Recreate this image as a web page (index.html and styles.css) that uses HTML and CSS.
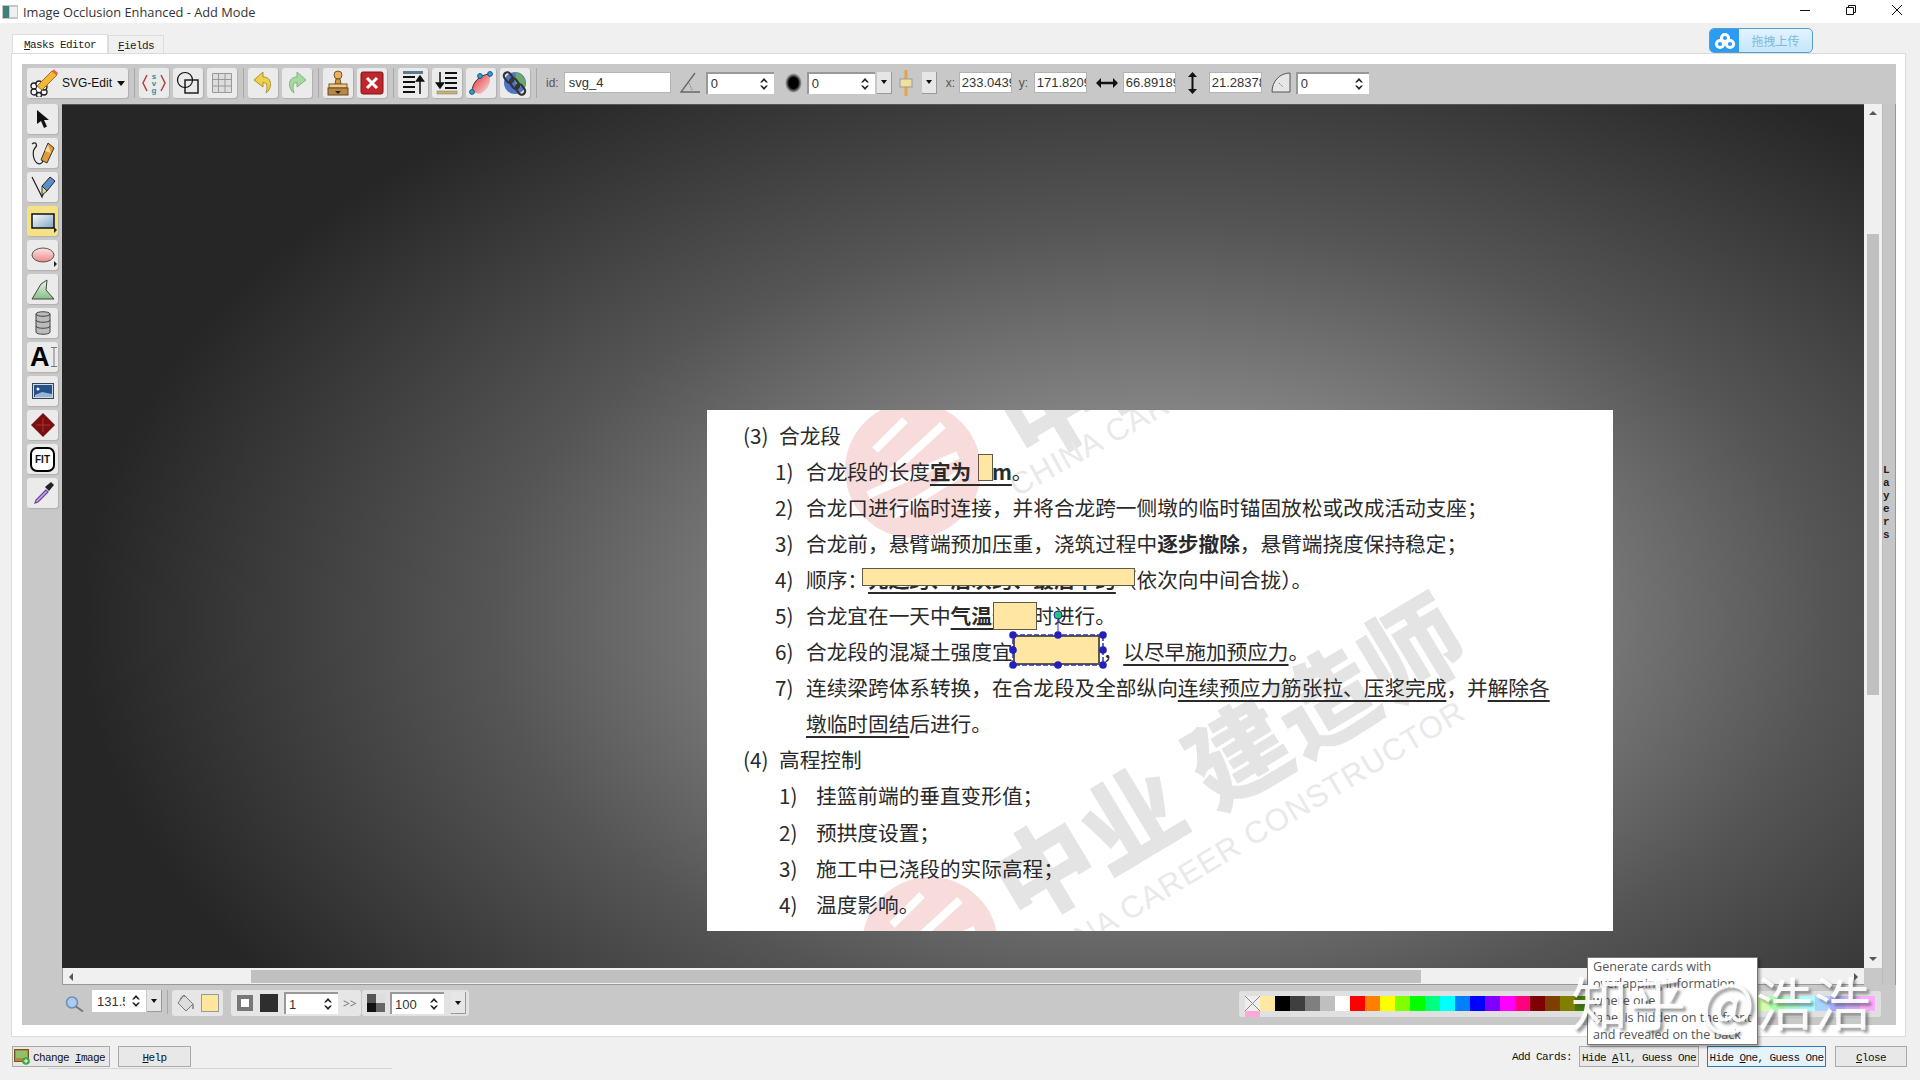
FILE: index.html
```html
<!DOCTYPE html>
<html lang="zh-CN">
<head>
    <meta charset="UTF-8">
    <title>Image Occlusion Enhanced - Add Mode</title>
    <link rel="stylesheet" href="styles.css">
</head>
<body>
    <svg class="defs" width="0" height="0">
        <symbol id="spin" viewBox="0 0 10 14">
            <path d="M5 1 9 5.500H7L5 3.400 3 5.500H1ZM5 13 1 8.500H3L5 10.600 7 8.500H9Z" fill="#222"/>
        </symbol>
    </svg>

    <div class="titlebar">
        <svg class="app-icon" width="16" height="14" viewBox="0 0 16 14">
            <rect width="16" height="14" fill="#c4c8cc"/>
            <rect x="1" y="1" width="6" height="12" fill="#3f7f78"/>
            <rect x="8" y="2" width="7" height="10" fill="#eef0f2"/>
        </svg>
        <span class="title-text">Image Occlusion Enhanced - Add Mode</span>
        <div class="win-buttons">
            <svg width="12" height="12" viewBox="0 0 12 12"><path d="M1 6.500H11" stroke="#111" fill="none"/></svg>
            <svg width="12" height="12" viewBox="0 0 12 12"><path d="M1.500 3.500H8.500V10.500H1.500ZM3.500 3.500V1.500H10.500V8.500H8.500" stroke="#111" fill="none"/></svg>
            <svg width="12" height="12" viewBox="0 0 12 12"><path d="M1 1 11 11M11 1 1 11" stroke="#111" fill="none"/></svg>
        </div>
    </div>

    <div class="tabs">
        <div class="tab tab-on"><u>M</u>asks Editor</div>
        <div class="tab"><u>F</u>ields</div>
    </div>

    <div class="upload-btn">
        <span class="upload-icon">
            <svg width="22" height="18" viewBox="0 0 22 18">
                <g fill="none" stroke="#fff" stroke-width="3">
                    <circle cx="11" cy="6" r="3.600"/>
                    <circle cx="6" cy="12" r="3.600"/>
                    <circle cx="16" cy="12" r="3.600"/>
                </g>
            </svg>
        </span>
        <span class="upload-text">拖拽上传</span>
    </div>

    <div class="panel">
        <div class="editor">
            <div class="top-bar">
                <div class="btn logo-btn">
                    <svg width="30" height="28" viewBox="0 0 30 28">
                        <g fill="#fff" stroke="#222" stroke-width="1.300">
                            <circle cx="5" cy="17" r="3"/><circle cx="5" cy="23" r="3"/><circle cx="10" cy="26" r="2.500"/>
                            <circle cx="15" cy="23" r="3"/><circle cx="15" cy="18" r="3"/><circle cx="10" cy="15" r="3"/>
                        </g>
                        <circle cx="10" cy="20" r="2.500" fill="#fff"/>
                        <path d="M8 17 23 2 28 6 13 21Z" fill="#f0b93a" stroke="#a86a18"/>
                        <path d="M23 2 25 0.500 29 4 28 6Z" fill="#e8604c"/>
                    </svg>
                    <span>SVG-Edit</span>
                    <i class="caret"></i>
                </div>
                <div class="sep"></div>
                <div class="btn">
                    <svg width="26" height="26" viewBox="0 0 26 26">
                        <path d="M6 5 2 13 6 21M20 5 24 13 20 21" fill="none" stroke="#b0413e" stroke-width="1.500"/>
                        <text class="svg-letters" x="13" y="9">s</text>
                        <text class="svg-letters" x="13" y="16">v</text>
                        <text class="svg-letters" x="13" y="23">g</text>
                    </svg>
                </div>
                <div class="btn">
                    <svg width="24" height="26" viewBox="0 0 24 26">
                        <circle cx="9" cy="10" r="7.500" fill="none" stroke="#111" stroke-width="1.200"/>
                        <rect x="9" y="10" width="13" height="13" fill="none" stroke="#111" stroke-width="1.400"/>
                    </svg>
                </div>
                <div class="btn">
                    <svg width="24" height="24" viewBox="0 0 24 24">
                        <path d="M2.500 2.500H21.500V21.500H2.500ZM8.500 2.500V21.500M15 2.500V21.500M2.500 8.500H21.500M2.500 15H21.500" fill="#ddd" stroke="#999"/>
                    </svg>
                </div>
                <div class="sep"></div>
                <div class="btn">
                    <svg width="24" height="26" viewBox="0 0 24 26">
                        <path d="M12 2 3 10 12 17V12.500C16 12.500 17 16 15 23 21 19 22 7 12 7Z" fill="#eed04a" stroke="#a9912c"/>
                    </svg>
                </div>
                <div class="btn">
                    <svg width="24" height="26" viewBox="0 0 24 26">
                        <path d="M12 2 21 10 12 17V12.500C8 12.500 7 16 9 23 3 19 2 7 12 7Z" fill="#a7d8a0" stroke="#84b37e"/>
                    </svg>
                </div>
                <div class="sep"></div>
                <div class="btn">
                    <svg width="26" height="28" viewBox="0 0 26 28">
                        <circle cx="13" cy="6" r="4" fill="#e7b25e" stroke="#7a5420"/>
                        <path d="M11 10H15L16 15H10Z" fill="#d79a44" stroke="#7a5420"/>
                        <rect x="4" y="15" width="18" height="4" fill="#eecb8a" stroke="#7a5420"/>
                        <rect x="3" y="19" width="20" height="7" fill="#b98745" stroke="#6b4a1c"/>
                        <path d="M10 22H16L13 25Z" fill="#222"/>
                    </svg>
                </div>
                <div class="btn">
                    <svg width="24" height="24" viewBox="0 0 24 24">
                        <rect x="1" y="1" width="22" height="22" rx="2" fill="#c0272d" stroke="#7d1518"/>
                        <path d="M7 7 17 17M17 7 7 17" stroke="#fff" stroke-width="3"/>
                    </svg>
                </div>
                <div class="sep"></div>
                <div class="btn">
                    <svg width="24" height="26" viewBox="0 0 24 26">
                        <rect x="2" y="1" width="20" height="3" fill="#5a7a90"/>
                        <path d="M2 7H14M2 12H14M2 17H14M2 22H14" stroke="#111" stroke-width="2"/>
                        <path d="M19 24V8M15.500 11 19 6 22.500 11Z" fill="#111" stroke="#111" stroke-width="1.500"/>
                    </svg>
                </div>
                <div class="btn">
                    <svg width="24" height="26" viewBox="0 0 24 26">
                        <path d="M10 3H22M10 8H22M10 13H22M10 18H22" stroke="#111" stroke-width="2"/>
                        <path d="M5 2V15M1.500 13 5 18 8.500 13Z" fill="#111" stroke="#111" stroke-width="1.500"/>
                        <rect x="2" y="21" width="20" height="3" fill="#c9b36a" stroke="#777" stroke-width=".5"/>
                    </svg>
                </div>
                <div class="btn">
                    <svg width="26" height="26" viewBox="0 0 26 26">
                        <defs>
                            <linearGradient id="curveFill" x1="0" y1="0" x2="1" y2="1">
                                <stop offset="0" stop-color="#e8262a"/>
                                <stop offset="1" stop-color="#f6e6e6"/>
                            </linearGradient>
                        </defs>
                        <path d="M4 22C4 12 12 5 21 4 24 12 20 20 12 24Z" fill="url(#curveFill)"/>
                        <path d="M4 22C4 12 12 5 21 4" fill="none" stroke="#333"/>
                        <circle cx="4" cy="22" r="2.400" fill="#2f9fd8" stroke="#16587c"/>
                        <circle cx="12" cy="6" r="2.400" fill="#2f9fd8" stroke="#16587c"/>
                        <circle cx="22" cy="4" r="2.400" fill="#2f9fd8" stroke="#16587c"/>
                    </svg>
                </div>
                <div class="btn">
                    <svg width="26" height="26" viewBox="0 0 26 26">
                        <circle cx="13" cy="13" r="11" fill="#4f74c4"/>
                        <path d="M13 2C20 3 25 9 23 17 19 15 17 19 14 15 12 11 15 6 13 2Z" fill="#6da86c"/>
                        <g fill="none" stroke="#333" stroke-width="2.200">
                            <rect x="3" y="2" width="7" height="11" rx="3.500" transform="rotate(-35 6.500 7.500)"/>
                            <rect x="9" y="8" width="7" height="11" rx="3.500" transform="rotate(-35 12.500 13.500)"/>
                            <rect x="15" y="14" width="7" height="11" rx="3.500" transform="rotate(-35 18.500 19.500)"/>
                        </g>
                    </svg>
                </div>
                <div class="sep"></div>
                <div class="props">
                    <span class="lbl ml-5">id:</span>
                    <div class="field id-field ml-5">svg_4</div>
                    <svg class="ml-9" width="21" height="22" viewBox="0 0 21 22">
                        <path d="M15 1 1 20H20" fill="none" stroke="#666" stroke-width="1.300"/>
                        <path d="M9 11 13 20" fill="none" stroke="#888" stroke-dasharray="2 1"/>
                    </svg>
                    <div class="spinbox ml-5"><span>0</span><svg width="10" height="14"><use href="#spin"/></svg></div>
                    <svg class="ml-11" width="17" height="22" viewBox="0 0 17 22">
                        <defs>
                            <radialGradient id="blurFill">
                                <stop offset=".55" stop-color="#000"/>
                                <stop offset="1" stop-color="#c8c8c8"/>
                            </radialGradient>
                        </defs>
                        <ellipse cx="8.500" cy="11" rx="8.500" ry="10" fill="url(#blurFill)"/>
                    </svg>
                    <div class="spinbox ml-5"><span>0</span><svg width="10" height="14"><use href="#spin"/></svg></div>
                    <div class="drop ml-2"><i class="caret-sm"></i></div>
                    <svg class="ml-7" width="14" height="26" viewBox="0 0 14 26">
                        <rect x="5.500" y="0" width="3" height="26" fill="#e8a24a"/>
                        <rect x="1" y="9" width="12" height="8" fill="#f0e0a0" stroke="#999"/>
                    </svg>
                    <div class="drop ml-9"><i class="caret-sm"></i></div>
                    <span class="lbl lbl-w15 lbl-x">x:</span>
                    <div class="field num-field">233.0439</div>
                    <span class="lbl lbl-w15">y:</span>
                    <div class="field num-field">171.8209</div>
                    <svg class="ml-9" width="22" height="12" viewBox="0 0 22 12">
                        <path d="M5 1 0 6 5 11V7.200H17V11L22 6 17 1V4.800H5Z" fill="#111"/>
                    </svg>
                    <div class="field num-field ml-5">66.89189</div>
                    <svg class="ml-11" width="11" height="22" viewBox="0 0 11 22">
                        <path d="M1 5 5.500 0 10 5H6.500V17H10L5.500 22 1 17H4.500V5Z" fill="#111"/>
                    </svg>
                    <div class="field num-field ml-11">21.28378</div>
                    <svg class="ml-9" width="20" height="22" viewBox="0 0 20 22">
                        <path d="M1 20H19V1C9 1 1 9 1 20Z" fill="#e6e6e6" stroke="#555"/>
                        <path d="M8 11 12 15" stroke="#888" stroke-dasharray="2 1"/>
                    </svg>
                    <div class="spinbox spin-wide ml-5"><span>0</span><svg width="10" height="14"><use href="#spin"/></svg></div>
                </div>
            </div>

            <div class="middle">
                <div class="tools">
                    <div class="btn tool">
                        <svg width="16" height="18" viewBox="0 0 16 18"><path d="M2 0V14L6 11 9 18 12 16.500 9 10H14Z" fill="#111"/></svg>
                    </div>
                    <div class="btn tool">
                        <svg width="26" height="26" viewBox="0 0 26 26">
                            <path d="M2 4C6 1 8 5 5 8 2 11 3 20 7 23 10 25 12 23 13 21" fill="none" stroke="#222" stroke-width="1.200"/>
                            <path d="M11 20 18 3 24 8 17 23Z" fill="#e59a3a" stroke="#333"/>
                            <path d="M15 11 21 13 18 5Z" fill="#f3d9a0"/>
                        </svg>
                    </div>
                    <div class="btn tool">
                        <svg width="26" height="26" viewBox="0 0 26 26">
                            <path d="M2 3 12 23 17 10" fill="none" stroke="#222" stroke-width="1.200"/>
                            <path d="M12 12 20 3 25 7 17 17Z" fill="#5b8fc0" stroke="#224"/>
                            <path d="M12 12 17 17 12 21Z" fill="#e8d8a0" stroke="#333"/>
                        </svg>
                    </div>
                    <div class="btn tool tool-on">
                        <svg width="24" height="16" viewBox="0 0 24 16">
                            <defs>
                                <linearGradient id="rectFill" x1="0" y1="0" x2="1" y2="1">
                                    <stop offset="0" stop-color="#fff"/>
                                    <stop offset="1" stop-color="#7fa3c4"/>
                                </linearGradient>
                            </defs>
                            <rect x="1" y="1" width="22" height="14" fill="url(#rectFill)" stroke="#111" stroke-width="1.500"/>
                        </svg>
                        <i class="flyout"></i>
                    </div>
                    <div class="btn tool">
                        <svg width="24" height="16" viewBox="0 0 24 16">
                            <defs>
                                <linearGradient id="ellFill" x1="0" y1="0" x2="0" y2="1">
                                    <stop offset="0" stop-color="#fbe4e4"/>
                                    <stop offset="1" stop-color="#e88"/>
                                </linearGradient>
                            </defs>
                            <ellipse cx="12" cy="8" rx="11" ry="7" fill="url(#ellFill)" stroke="#555"/>
                        </svg>
                        <i class="flyout"></i>
                    </div>
                    <div class="btn tool">
                        <svg width="24" height="22" viewBox="0 0 24 22">
                            <defs>
                                <linearGradient id="polyFill" x1="0" y1="0" x2="0" y2="1">
                                    <stop offset="0" stop-color="#eaf5ea"/>
                                    <stop offset="1" stop-color="#86c08a"/>
                                </linearGradient>
                            </defs>
                            <path d="M1 21 10 6 16 2 15 12 23 21Z" fill="url(#polyFill)" stroke="#444"/>
                        </svg>
                    </div>
                    <div class="btn tool">
                        <svg width="16" height="24" viewBox="0 0 16 24">
                            <path d="M1 3C1 0 15 0 15 3V21C15 24 1 24 1 21Z" fill="#bbb" stroke="#444"/>
                            <path d="M1 3C1 6 15 6 15 3M1 9C1 12 15 12 15 9M1 15C1 18 15 18 15 15" fill="none" stroke="#444"/>
                        </svg>
                    </div>
                    <div class="btn tool tool-text">A<svg width="6" height="20" viewBox="0 0 6 20"><path d="M0 .5H6M3 .5V19.500M0 19.500H6" stroke="#777" fill="none"/></svg></div>
                    <div class="btn tool">
                        <svg width="22" height="16" viewBox="0 0 22 16">
                            <rect x=".5" y=".5" width="21" height="15" fill="#d0d8e0" stroke="#345"/>
                            <rect x="2" y="2" width="18" height="12" fill="#24508c"/>
                            <circle cx="6" cy="6" r="1.500" fill="#fff"/>
                            <path d="M3 12 10 9 20 11V14H3Z" fill="#9ab4d4"/>
                        </svg>
                    </div>
                    <div class="btn tool">
                        <svg width="24" height="24" viewBox="0 0 24 24">
                            <path d="M12 0 24 12 12 24 0 12Z" fill="#7a0f0f"/>
                            <path d="M12 5V19M5 12H19" stroke="#a33" stroke-width="1"/>
                        </svg>
                    </div>
                    <div class="btn tool"><span class="fit-label">FIT</span></div>
                    <div class="btn tool">
                        <svg width="24" height="24" viewBox="0 0 24 24">
                            <path d="M15 9 5 19 4 22 7 21 17 11Z" fill="#c8a8e8" stroke="#6b3fa0" stroke-width="1.200"/>
                            <path d="M14 6 18 10 23 4 20 1Z" fill="#222"/>
                        </svg>
                    </div>
                </div>

                <div class="main">
                    <div class="canvas-row">
                        <div class="canvas">
                            <div class="doc">
                                <svg class="watermark" width="906" height="521" viewBox="0 0 906 521">
                                    <g transform="translate(206 60)">
                                        <circle r="68" fill="#f8dcdc"/>
                                        <path d="M-38 -20 -8 -50M-30 10 30 -45M-45 25 45 -15M-20 45 45 5" stroke="#fff" stroke-width="8"/>
                                    </g>
                                    <g transform="translate(223 535)">
                                        <circle r="68" fill="#f8dcdc"/>
                                        <path d="M-38 -20 -8 -50M-30 10 30 -45M-45 25 45 -15M-20 45 45 5" stroke="#fff" stroke-width="8"/>
                                    </g>
                                    <text class="wm-big" x="548" y="-80" text-anchor="middle" transform="rotate(-31 548 -80)">中业 建造师</text>
                                    <text class="wm-big" x="541" y="382" text-anchor="middle" transform="rotate(-31 541 382)">中业 建造师</text>
                                    <text class="wm-small" x="310" y="87" transform="rotate(-29 310 87)">CHINA CAREER CONSTRUCTOR</text>
                                    <text class="wm-small" x="327" y="568" transform="rotate(-31 327 568)">CHINA CAREER CONSTRUCTOR</text>
                                </svg>

                                <div class="doc-text">
                                    <div class="row head"><span class="n-head">(3)</span>合龙段</div>
                                    <div class="row"><span class="n">1)</span><span>合龙段的长度<b class="ul">宜为&emsp;m</b>。</span></div>
                                    <div class="row"><span class="n">2)</span><span>合龙口进行临时连接，并将合龙跨一侧墩的临时锚固放松或改成活动支座；</span></div>
                                    <div class="row"><span class="n">3)</span><span>合龙前，悬臂端预加压重，浇筑过程中<b>逐步撤除</b>，悬臂端挠度保持稳定；</span></div>
                                    <div class="row"><span class="n">4)</span><span>顺序：<b class="ul">先边跨、后次跨、最后中跨</b>（依次向中间合拢）。</span></div>
                                    <div class="row"><span class="n">5)</span><span>合龙宜在一天中<b class="ul">气温最低</b>时进行。</span></div>
                                    <div class="row"><span class="n">6)</span><span>合龙段的混凝土强度宜<i class="gap-2"></i>，<span class="ul">以尽早施加预应力</span>。</span></div>
                                    <div class="row"><span class="n">7)</span><span>连续梁跨体系转换，在合龙段及全部纵向<span class="ul">连续预应力筋张拉、压浆完成</span>，并<span class="ul">解除各</span></span></div>
                                    <div class="row"><span class="n"></span><span><span class="ul">墩临时固结</span>后进行。</span></div>
                                    <div class="row head"><span class="n-head">(4)</span>高程控制</div>
                                    <div class="row sub"><span class="n">1)</span><span>挂篮前端的垂直变形值；</span></div>
                                    <div class="row sub"><span class="n">2)</span><span>预拱度设置；</span></div>
                                    <div class="row sub"><span class="n">3)</span><span>施工中已浇段的实际高程；</span></div>
                                    <div class="row sub"><span class="n">4)</span><span>温度影响。</span></div>
                                </div>

                                <div class="mask mask-1"></div>
                                <div class="mask mask-2"></div>
                                <div class="mask mask-3"></div>
                                <div class="mask mask-4"></div>
                                <svg class="handles" width="104" height="76" viewBox="0 0 104 76">
                                    <path d="M51 22V42" stroke="#3b3bc8"/>
                                    <rect x="6" y="42" width="90" height="30" fill="none" stroke="#3333aa" stroke-width="1.500" stroke-dasharray="5 2"/>
                                    <circle cx="51" cy="22" r="4" fill="#22c87a" stroke="#2222aa"/>
                                    <g fill="#2222bb">
                                        <circle cx="6" cy="42" r="3.800"/><circle cx="51" cy="42" r="3.800"/><circle cx="96" cy="42" r="3.800"/>
                                        <circle cx="6" cy="57" r="3.800"/><circle cx="96" cy="57" r="3.800"/>
                                        <circle cx="6" cy="72" r="3.800"/><circle cx="51" cy="72" r="3.800"/><circle cx="96" cy="72" r="3.800"/>
                                    </g>
                                </svg>
                            </div>
                        </div>
                        <div class="vscroll">
                            <i class="arr-up"></i>
                            <div class="vthumb"></div>
                            <i class="arr-down"></i>
                        </div>
                    </div>
                    <div class="hscroll">
                        <i class="arr-left"></i>
                        <div class="hthumb"></div>
                        <i class="arr-right"></i>
                    </div>
                </div>

                <div class="layers">
                    <span>L</span><span>a</span><span>y</span><span>e</span><span>r</span><span>s</span>
                </div>
            </div>

            <div class="bottom-bar">
                <svg class="zoom-icon" width="19" height="16" viewBox="0 0 19 16">
                    <circle cx="7" cy="6.500" r="5.500" fill="#a8cdf0" stroke="#6d8fb4" stroke-width="1.500"/>
                    <path d="M11 10.500 18 15.500" stroke="#777" stroke-width="2"/>
                </svg>
                <div class="spinbox zoom-box"><span class="clip">131.5</span><svg width="10" height="14"><use href="#spin"/></svg></div>
                <div class="drop drop-low"><i class="caret-sm"></i></div>
                <div class="sep sep-low"></div>
                <div class="group fill-group">
                    <svg width="18" height="18" viewBox="0 0 18 18">
                        <path d="M7 1 16 10 9 17 1 9Z" fill="#ddd" stroke="#777"/>
                        <path d="M3 6C5 1 7 1 8 3" fill="none" stroke="#777"/>
                        <path d="M16 10V15" stroke="#999" stroke-width="2"/>
                    </svg>
                    <i class="swatch fill-swatch"></i>
                </div>
                <div class="group stroke-group">
                    <svg width="16" height="16" viewBox="0 0 16 16">
                        <rect x="2" y="2" width="12" height="12" fill="#fff" stroke="#777" stroke-width="4"/>
                    </svg>
                    <i class="swatch stroke-swatch"></i>
                    <div class="spinbox stroke-box"><span>1</span><svg width="10" height="14"><use href="#spin"/></svg></div>
                    <span class="more">&gt;&gt;</span>
                </div>
                <div class="group opacity-group">
                    <i class="swatch opacity-swatch"></i>
                    <div class="spinbox opacity-box"><span>100</span><svg width="10" height="14"><use href="#spin"/></svg></div>
                    <div class="drop drop-op"><i class="caret-sm"></i></div>
                </div>
                <div class="palette">
                    <i class="pal-none"></i>
                    <i style="background:#ffe9a0"></i>
                    <i style="background:#000000"></i><i style="background:#3f3f3f"></i><i style="background:#7f7f7f"></i><i style="background:#bfbfbf"></i><i style="background:#ffffff"></i>
                    <i style="background:#ff0000"></i><i style="background:#ff7f00"></i><i style="background:#ffff00"></i><i style="background:#7fff00"></i><i style="background:#00ff00"></i><i style="background:#00ff7f"></i><i style="background:#00ffff"></i><i style="background:#007fff"></i><i style="background:#0000ff"></i><i style="background:#7f00ff"></i><i style="background:#ff00ff"></i><i style="background:#ff007f"></i>
                    <i style="background:#7f0000"></i><i style="background:#7f3f00"></i><i style="background:#7f7f00"></i><i style="background:#3f7f00"></i><i style="background:#007f00"></i><i style="background:#007f3f"></i><i style="background:#007f7f"></i><i style="background:#003f7f"></i><i style="background:#00007f"></i><i style="background:#3f007f"></i><i style="background:#7f007f"></i><i style="background:#7f003f"></i>
                    <i style="background:#ffaaaa"></i><i style="background:#ffd4aa"></i><i style="background:#ffffaa"></i><i style="background:#d4ffaa"></i><i style="background:#aaffaa"></i><i style="background:#aaffd4"></i><i style="background:#aaffff"></i><i style="background:#aad4ff"></i><i style="background:#aaaaff"></i><i style="background:#d4aaff"></i><i style="background:#ffaaff"></i>
                    <i style="background:#ffaad4"></i>
                </div>
            </div>
        </div>
    </div>

    <div class="footer">
        <div class="foot-btn change-btn">
            <svg width="16" height="16" viewBox="0 0 16 16">
                <rect x=".5" y=".5" width="14" height="12" fill="#b8843c" stroke="#7a5420"/>
                <rect x="2" y="2" width="11" height="7" fill="#8fc06a"/>
                <circle cx="12" cy="12" r="3.800" fill="#3aa53a"/>
                <path d="M12 9.800V14.200M9.800 12H14.200" stroke="#fff"/>
            </svg>
            <span>Change <u>I</u>mage</span>
        </div>
        <div class="foot-btn help-btn"><span><u>H</u>elp</span></div>
        <span class="add-label">Add Cards:</span>
        <div class="foot-btn hide-all"><span>Hide <u>A</u>ll, Guess One</span></div>
        <div class="foot-btn hide-one"><span>Hide <u>O</u>ne, Guess One</span></div>
        <div class="foot-btn close-btn"><span><u>C</u>lose</span></div>
    </div>
    <div class="stub"></div>

    <div class="tooltip">Generate cards with<br>overlapping information<br>where one<br>label is hidden on the front<br>and revealed on the back</div>
    <div class="zhihu-mark">知乎 @浩浩</div>
</body>
</html>
```

FILE: styles.css
```css
* {
    box-sizing: border-box;
}

html, body {
    margin: 0;
    padding: 0;
}

body {
    width: 1920px;
    height: 1080px;
    overflow: hidden;
    position: relative;
    background-color: #f0f0f0;
    font-family: "Open Sans", sans-serif;
    color: #222;
}

i {
    font-style: normal;
}

.defs {
    position: absolute;
}

/* title bar */
.titlebar {
    height: 23px;
    background-color: #fff;
    display: flex;
    align-items: center;
    padding-left: 2px;
}

.title-text {
    margin-left: 5px;
    font-size: 12.8px;
    color: #333;
}

.win-buttons {
    margin-left: auto;
    display: flex;
    gap: 34px;
    padding-right: 17px;
    margin-top: -4px;
}

/* tabs */
.tabs {
    display: flex;
    height: 30px;
    padding: 12px 0 0 12px;
}

.tab {
    width: 56px;
    font-family: "Liberation Mono", monospace;
    font-size: 11px;
    letter-spacing: -.6px;
    background-color: #f0f0f0;
    border: 1px solid #ddd;
    border-bottom: none;
    text-align: center;
    line-height: 20px;
}

.tab-on {
    width: 96px;
    background-color: #fff;
    margin-top: -1px;
}

.upload-btn {
    position: absolute;
    left: 1709px;
    top: 28px;
    width: 104px;
    height: 25px;
    display: flex;
    border: 1px solid #5b9ecb;
    border-radius: 5px;
    overflow: hidden;
    background: linear-gradient(#e2f4ff, #c4e6fb);
}

.upload-icon {
    width: 29px;
    background-color: #2b9cf2;
    display: flex;
    align-items: center;
    justify-content: center;
}

.upload-text {
    flex: 1;
    text-align: center;
    font-family: "Noto Sans CJK SC", sans-serif;
    font-size: 12px;
    line-height: 23px;
    color: #7fb9d8;
}

/* main panel */
.panel {
    margin-left: 11px;
    width: 1895px;
    height: 984px;
    background-color: #fff;
    border: 1px solid #dcdcdc;
    padding: 10px 9px 11px 10px;
}

.editor {
    height: 961px;
    background-color: #c8c8c8;
    display: flex;
    flex-direction: column;
}

.btn {
    width: 30px;
    height: 30px;
    flex: none;
    background-color: #ebebeb;
    border-radius: 3px;
    box-shadow: 1px 1px 1px #b0b0b0;
    display: flex;
    align-items: center;
    justify-content: center;
    position: relative;
}

.sep {
    width: 1px;
    height: 30px;
    background-color: #a8a8a8;
    margin-left: 2px;
    flex: none;
}

.top-bar {
    height: 40px;
    display: flex;
    gap: 4px;
    padding: 4px 0 0 5px;
}

.logo-btn {
    width: 101px;
    justify-content: flex-start;
    padding-left: 2px;
    font-family: "Liberation Sans", sans-serif;
    font-size: 12px;
    color: #111;
}

.logo-btn span {
    margin-left: 3px;
}

.caret {
    margin-left: 5px;
    border-left: 4px solid transparent;
    border-right: 4px solid transparent;
    border-top: 5px solid #111;
}

.svg-letters {
    font-family: "Liberation Sans", sans-serif;
    font-size: 8px;
    font-weight: bold;
    fill: #2f8f9a;
    text-anchor: middle;
}

.props {
    display: flex;
    align-items: center;
    height: 29px;
}

.ml-2 { margin-left: 2px; }
.ml-5 { margin-left: 5px; }
.ml-7 { margin-left: 7px; }
.ml-9 { margin-left: 9px; }
.ml-11 { margin-left: 11px; }

.lbl {
    font-family: "Liberation Sans", sans-serif;
    font-size: 12px;
    color: #555;
}

.lbl-w15 {
    width: 15px;
    margin-left: 7px;
}

.lbl-x {
    margin-left: 9px;
    width: 13px;
}

.field {
    height: 21px;
    background-color: #fff;
    font-family: "Liberation Sans", sans-serif;
    font-size: 13px;
    line-height: 19px;
    color: #333;
    padding-left: 3px;
    overflow: hidden;
    white-space: nowrap;
    border: 1px solid #b4b4b4;
    flex: none;
}

.id-field {
    width: 107px;
    padding-left: 4px;
}

.num-field {
    width: 53px;
    padding-left: 2px;
}

.spinbox {
    width: 68px;
    height: 22px;
    flex: none;
    background-color: #fff;
    border-left: 2px solid #999;
    border-top: 2px solid #999;
    display: flex;
    align-items: center;
    justify-content: space-between;
    padding: 0 5px 0 3px;
    font-family: "Liberation Sans", sans-serif;
    font-size: 13px;
    color: #333;
}

.spin-wide {
    width: 73px;
}

.drop {
    width: 15px;
    height: 22px;
    flex: none;
    background-color: #e6e6e6;
    border-right: 1px solid #999;
    border-bottom: 1px solid #999;
    display: flex;
    align-items: center;
    justify-content: center;
}

.caret-sm {
    border-left: 3px solid transparent;
    border-right: 3px solid transparent;
    border-top: 4px solid #111;
}

/* middle area */
.middle {
    flex: 1;
    display: flex;
    min-height: 0;
}

.tools {
    width: 40px;
    flex: none;
    padding-left: 5px;
    display: flex;
    flex-direction: column;
    gap: 4px;
}

.tool {
    width: 31px;
}

.tool-on {
    background-color: #f4e284;
}

.flyout {
    position: absolute;
    right: 1px;
    bottom: 3px;
    border-top: 3px solid transparent;
    border-bottom: 3px solid transparent;
    border-left: 3px solid #222;
}

.tool-text {
    font-family: "Liberation Sans", sans-serif;
    font-size: 27px;
    font-weight: bold;
    color: #000;
    justify-content: flex-start;
    padding-left: 3px;
    gap: 1px;
}

.fit-label {
    width: 25px;
    height: 25px;
    border: 2px solid #000;
    border-radius: 7px;
    background-color: #fff;
    font-family: "Liberation Sans", sans-serif;
    font-size: 10px;
    font-weight: bold;
    text-align: center;
    line-height: 21px;
    color: #111;
}

.main {
    flex: 1;
    min-width: 0;
    display: flex;
    flex-direction: column;
}

.canvas-row {
    flex: 1;
    display: flex;
    min-height: 0;
}

.canvas {
    flex: 1;
    position: relative;
    overflow: hidden;
    background: radial-gradient(ellipse 1080px 640px at 1098px 516px, #a0a0a0 0%, #888 30%, #555 62%, #262626 100%);
    border-top: 1px solid #555;
}

.doc {
    position: absolute;
    left: 645px;
    top: 305px;
    width: 906px;
    height: 521px;
    background-color: #fff;
    overflow: hidden;
}

.watermark {
    position: absolute;
    left: 0;
    top: 0;
}

.wm-big {
    font-family: "Noto Sans CJK SC", sans-serif;
    font-size: 100px;
    font-weight: 900;
    letter-spacing: 1px;
    fill: #e4e4e4;
}

.wm-small {
    font-family: "Liberation Sans", sans-serif;
    font-size: 31px;
    letter-spacing: 1px;
    fill: #e9e9e9;
}

.doc-text {
    position: relative;
    padding-top: 6.5px;
    font-family: "Noto Sans CJK SC", sans-serif;
    font-size: 20.67px;
    color: #2a2a2a;
}

.row {
    display: flex;
    height: 36.1px;
    line-height: 36px;
    padding-left: 68px;
    white-space: nowrap;
}

.row.head {
    padding-left: 36px;
}

.row.sub {
    padding-left: 72px;
}

.n-head {
    width: 36px;
}

.n {
    width: 31px;
    flex: none;
}

.row.sub .n {
    width: 37px;
}

.ul {
    text-decoration: underline;
    text-decoration-thickness: 2px;
    text-underline-offset: 4px;
}

.gap-2 {
    display: inline-block;
    width: 90px;
}

.mask {
    position: absolute;
    background-color: #ffe7a3;
    border: 1px solid #5f5a48;
}

.mask-1 { left: 271px; top: 44px; width: 15px; height: 27px; }
.mask-2 { left: 155px; top: 158px; width: 273px; height: 18px; }
.mask-3 { left: 286px; top: 192px; width: 44px; height: 28px; }
.mask-4 { left: 306px; top: 225px; width: 87px; height: 30px; border-width: 2px; }

.handles {
    position: absolute;
    left: 300px;
    top: 183px;
}

.vscroll {
    width: 18px;
    flex: none;
    background-color: #f0f0f0;
    position: relative;
}

.vthumb {
    position: absolute;
    left: 3px;
    top: 130px;
    width: 12px;
    height: 461px;
    background-color: #c0c0c0;
}

.arr-up, .arr-down, .arr-left, .arr-right {
    position: absolute;
}

.arr-up {
    left: 5px;
    top: 7px;
    border-left: 4px solid transparent;
    border-right: 4px solid transparent;
    border-bottom: 4px solid #555;
}

.arr-down {
    left: 5px;
    bottom: 7px;
    border-left: 4px solid transparent;
    border-right: 4px solid transparent;
    border-top: 4px solid #555;
}

.hscroll {
    height: 17px;
    flex: none;
    background-color: #f0f0f0;
    position: relative;
    margin-right: 18px;
    border-bottom: 1px solid #999;
    border-left: 1px solid #999;
}

.hthumb {
    position: absolute;
    left: 188px;
    top: 2px;
    width: 1170px;
    height: 13px;
    background-color: #c0c0c0;
}

.arr-left {
    left: 6px;
    top: 5px;
    border-top: 4px solid transparent;
    border-bottom: 4px solid transparent;
    border-right: 4px solid #555;
}

.arr-right {
    right: 6px;
    top: 5px;
    border-top: 4px solid transparent;
    border-bottom: 4px solid transparent;
    border-left: 4px solid #555;
}

.layers {
    width: 14px;
    flex: none;
    border-right: 1px solid #999;
    border-left: 1px solid #bbb;
    background-color: #c6c6c6;
    padding: 360px 0 0 0;
    display: flex;
    flex-direction: column;
    font-family: "Liberation Mono", monospace;
    font-size: 11px;
    font-weight: bold;
    line-height: 13px;
    color: #222;
}

/* bottom toolbar */
.bottom-bar {
    height: 40px;
    flex: none;
    display: flex;
    align-items: flex-start;
    padding-top: 5px;
    position: relative;
}

.zoom-icon {
    margin: 6px 0 0 43px;
    flex: none;
}

.zoom-box {
    width: 54px;
    margin-left: 8px;
    border: none;
    padding: 0 5px;
}

.clip {
    width: 28px;
    overflow: hidden;
}

.drop-low {
    margin-left: 1px;
}

.sep-low {
    height: 24px;
    margin-left: 5px;
}

.group {
    height: 26px;
    background-color: #e6e6e6;
    border-radius: 3px;
    display: flex;
    align-items: center;
    flex: none;
}

.fill-group {
    margin: 0 0 0 4px;
    width: 51px;
    padding-left: 5px;
    gap: 6px;
}

.swatch {
    width: 18px;
    height: 18px;
    flex: none;
}

.fill-swatch {
    background-color: #ffe69c;
    border: 1px solid #999;
}

.stroke-group {
    margin-left: 8px;
    width: 130px;
    padding-left: 6px;
    gap: 7px;
}

.stroke-swatch {
    background-color: #2e2e2e;
}

.stroke-box {
    width: 54px;
    margin-left: -1px;
}

.more {
    font-size: 12px;
    color: #777;
    margin-left: -2px;
}

.opacity-group {
    margin-left: 1px;
    width: 107px;
    padding-left: 5px;
    gap: 5px;
    background-color: #e2e2e2;
}

.opacity-swatch {
    background: conic-gradient(#ddd 0 25%, #666 0 50%, #111 0 75%, #555 0);
}

.opacity-box {
    width: 54px;
}

.drop-op {
    margin-left: 2px;
}

.palette {
    position: absolute;
    left: 1217px;
    top: 6px;
    width: 642px;
    height: 26px;
    background-color: #e0e0e0;
    border-radius: 3px;
    padding: 5px 6px 0;
    display: flex;
    flex-wrap: wrap;
    align-content: flex-start;
    overflow: hidden;
}

.palette i {
    width: 15px;
    height: 15px;
    flex: none;
}

.pal-none {
    background: linear-gradient(45deg, transparent 47%, #888 47% 53%, transparent 53%), linear-gradient(-45deg, #eee 47%, #888 47% 53%, #eee 53%);
}

/* footer buttons */
.footer {
    height: 30px;
    padding: 9px 0 0 12px;
    display: flex;
    font-family: "Liberation Mono", monospace;
    font-size: 11px;
    letter-spacing: -.6px;
    color: #111;
}

.foot-btn {
    height: 21px;
    background-color: #e8e8e8;
    border: 1px solid #aaa;
    display: flex;
    align-items: center;
    justify-content: center;
    padding-top: 2px;
}

.change-btn {
    width: 98px;
    justify-content: flex-start;
    gap: 3px;
    padding: 0 0 0 1px;
}

.change-btn span {
    padding-top: 2px;
}

.help-btn {
    width: 73px;
    margin-left: 8px;
}

.add-label {
    margin-left: 1321px;
    width: 67px;
    line-height: 23px;
}

.hide-all {
    width: 120px;
}

.hide-one {
    width: 119px;
    margin-left: 8px;
    border-color: #2b7bb5;
    background-color: #e6f3fb;
}

.close-btn {
    width: 72px;
    margin-left: 9px;
}

.stub {
    width: 344px;
    margin: 1px 0 0 48px;
    border-top: 1px solid #d6d6d6;
}

/* overlays */
.tooltip {
    position: absolute;
    left: 1587px;
    top: 957px;
    width: 171px;
    height: 88px;
    background-color: #fff;
    border: 1px solid #777;
    box-shadow: 2px 2px 3px rgba(0, 0, 0, .35);
    padding: 0 0 0 5px;
    font-size: 12.6px;
    line-height: 17px;
    color: #555;
    white-space: nowrap;
}

.zhihu-mark {
    position: absolute;
    left: 1571px;
    top: 960px;
    font-family: "Noto Sans CJK SC", sans-serif;
    font-size: 57px;
    letter-spacing: 1px;
    line-height: 80px;
    color: rgba(255, 255, 255, .92);
    text-shadow: 3px 3px 3px rgba(70, 70, 70, .55);
    white-space: nowrap;
}
```
